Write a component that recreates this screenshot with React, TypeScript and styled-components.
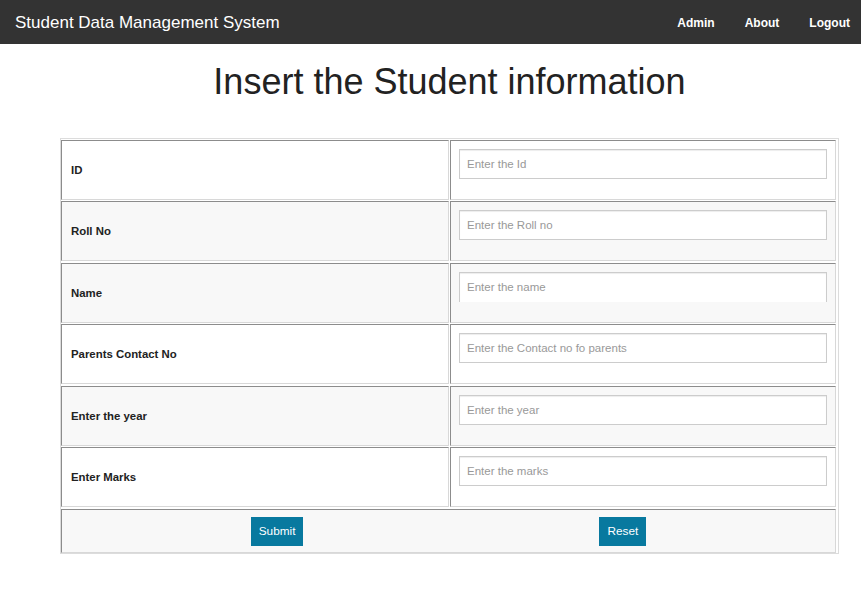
import React from "react";
import styled, { createGlobalStyle } from "styled-components";

const GlobalStyle = createGlobalStyle`
  html, body { margin: 0; padding: 0; background: #fff; }
  body {
    font-family: "Liberation Sans", Arial, Helvetica, sans-serif;
    color: #333;
  }
  * { box-sizing: border-box; }
`;

const NavBar = styled.nav`
  height: 44px;
  background: #333333;
  display: flex;
  align-items: center;
  justify-content: space-between;
  padding: 1px 11px 0 15px;
`;

const Brand = styled.a`
  color: #fff;
  font-size: 17px;
  text-decoration: none;
`;

const NavLinks = styled.div`
  display: flex;
  gap: 30px;
`;

const NavLink = styled.a`
  color: #fff;
  font-size: 12px;
  font-weight: bold;
  text-decoration: none;
`;

const Main = styled.main`
  width: 779px;
  margin-left: 60px;
`;

const Heading = styled.h1`
  margin: 18px 0 36px;
  font-size: 36px;
  font-weight: 500;
  line-height: 1.1;
  text-align: center;
  color: #222;
`;

const FormTable = styled.form`
  border: 1px solid #dcdcdc;
  padding: 1px 2px 0 0;
  display: grid;
  grid-template-columns: 388px 1fr;
  column-gap: 1px;
  row-gap: 1.5px;
`;

const Cell = styled.div<{ $shade?: boolean }>`
  height: 60px;
  border-top: 1px solid #8c8c8c;
  border-left: 1px solid #8c8c8c;
  border-bottom: 1px solid #d8d8d8;
  border-right: 1px solid #d8d8d8;
  background: ${(p) => (p.$shade ? "#f8f8f8" : "#fff")};
  padding: 8px;
`;

const LabelCell = styled(Cell)`
  display: flex;
  align-items: center;
  padding-left: 9px;
  font-size: 11.4px;
  font-weight: bold;
  color: #222;
`;

const Input = styled.input<{ $cut?: boolean }>`
  display: block;
  width: 100%;
  height: 30px;
  padding: 0 7px;
  font-family: "Liberation Sans", Arial, sans-serif;
  font-size: 11.5px;
  color: #555;
  background: #fff;
  border: 1px solid #cccccc;
  border-bottom: ${(p) => (p.$cut ? "none" : "1px solid #cccccc")};
  box-shadow: inset 0 1px 1px rgba(0, 0, 0, 0.075);
  outline: none;
  &::placeholder {
    color: #999;
  }
`;

const ButtonCell = styled.div`
  grid-column: 1 / span 2;
  height: 44px;
  border-top: 1px solid #8c8c8c;
  border-left: 1px solid #8c8c8c;
  border-bottom: 1px solid #d8d8d8;
  border-right: 1px solid #d8d8d8;
  background: #f8f8f8;
  display: flex;
  justify-content: center;
  align-items: flex-start;
  padding-top: 7px;
  gap: 296px;
`;

const Button = styled.button`
  height: 29px;
  padding: 0 8px;
  border: none;
  background: #08799f;
  color: #fff;
  font-family: "Liberation Sans", Arial, sans-serif;
  font-size: 11.8px;
  cursor: pointer;
`;

const fields = [
  { label: "ID", placeholder: "Enter the Id", shade: false },
  { label: "Roll No", placeholder: "Enter the Roll no", shade: true },
  { label: "Name", placeholder: "Enter the name", shade: true, cut: true },
  { label: "Parents Contact No", placeholder: "Enter the Contact no fo parents", shade: false },
  { label: "Enter the year", placeholder: "Enter the year", shade: true },
  { label: "Enter Marks", placeholder: "Enter the marks", shade: false },
];

export default function App() {
  return (
    <>
      <GlobalStyle />
      <NavBar>
        <Brand href="#">Student Data Management System</Brand>
        <NavLinks>
          <NavLink href="#">Admin</NavLink>
          <NavLink href="#">About</NavLink>
          <NavLink href="#">Logout</NavLink>
        </NavLinks>
      </NavBar>
      <Main>
        <Heading>Insert the Student information</Heading>
        <FormTable onSubmit={(e) => e.preventDefault()}>
          {fields.map((f) => (
            <React.Fragment key={f.label}>
              <LabelCell $shade={f.shade}>{f.label}</LabelCell>
              <Cell $shade={f.shade}>
                <Input placeholder={f.placeholder} $cut={f.cut} />
              </Cell>
            </React.Fragment>
          ))}
          <ButtonCell>
            <Button type="submit">Submit</Button>
            <Button type="reset">Reset</Button>
          </ButtonCell>
        </FormTable>
      </Main>
    </>
  );
}
